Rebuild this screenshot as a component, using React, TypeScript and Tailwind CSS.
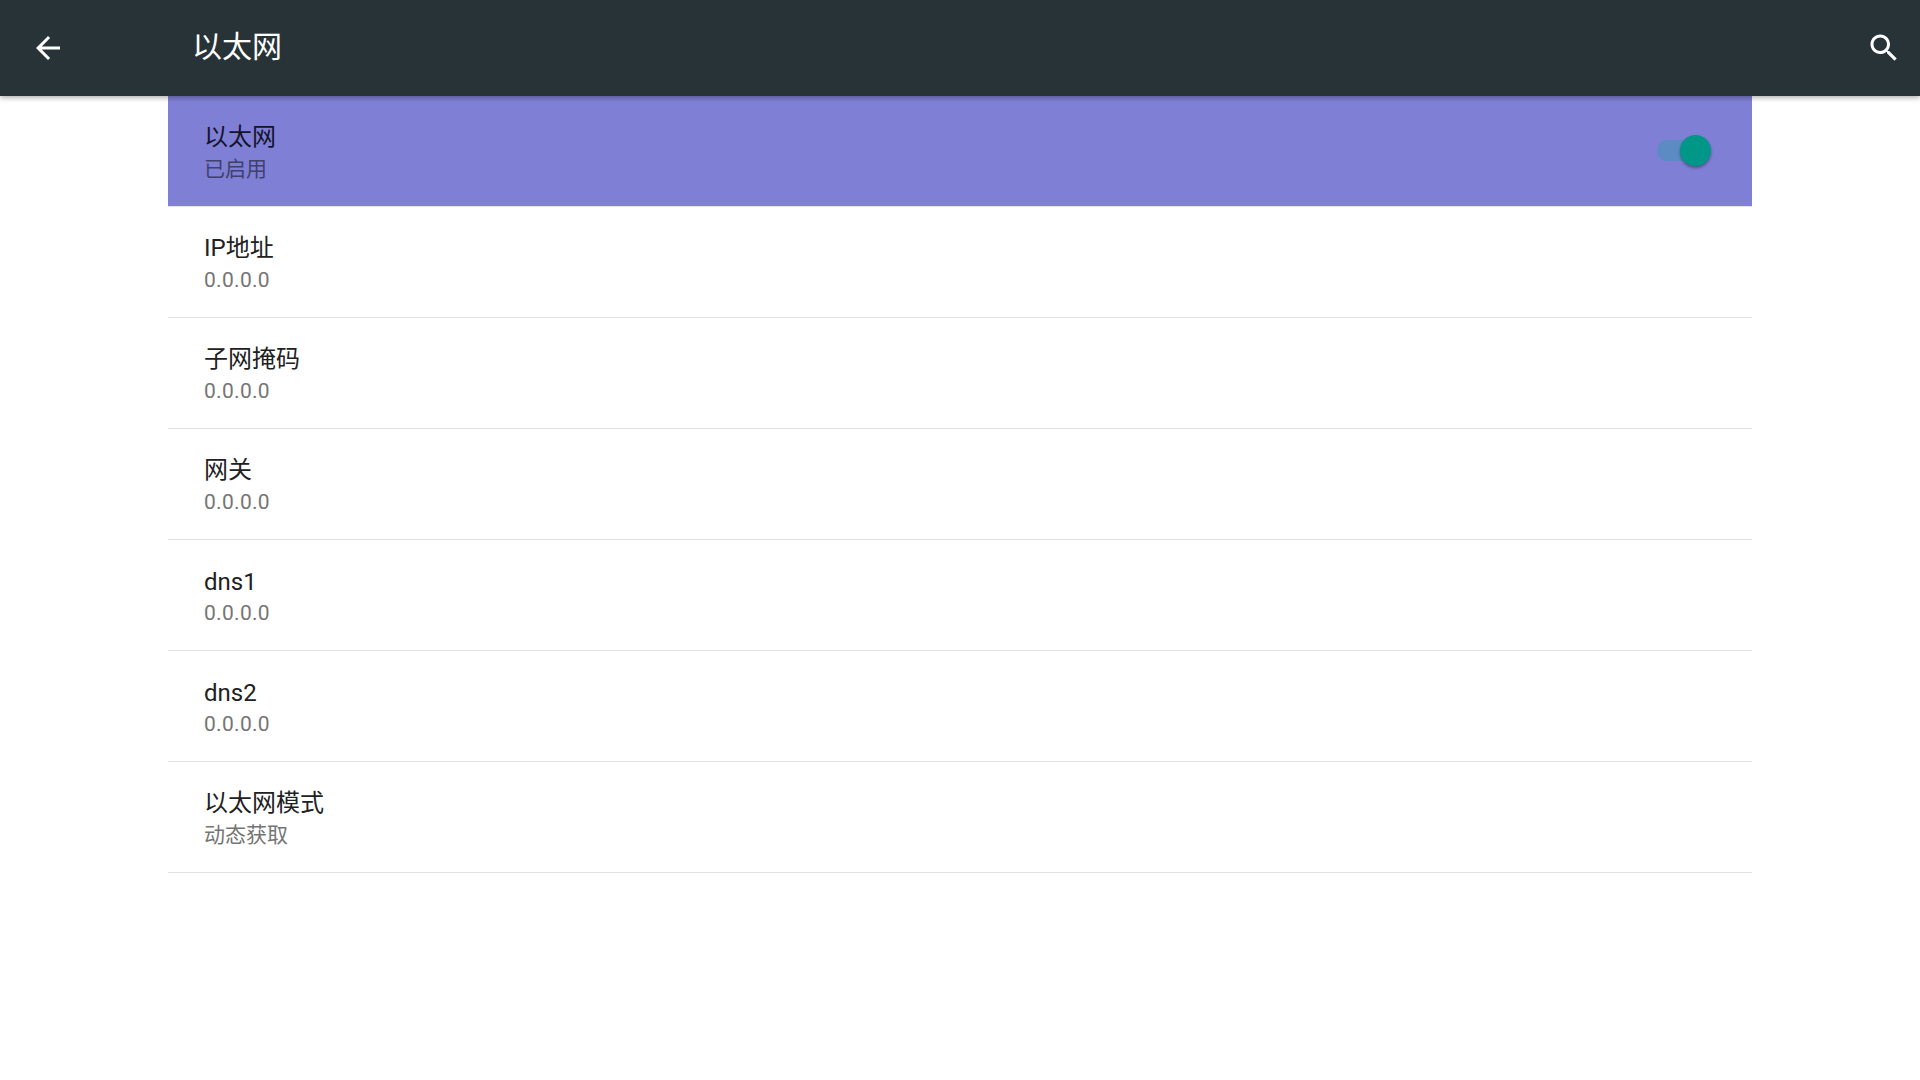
import React from "react";

interface IRow {
  title: string;
  value: string;
}

const rows: IRow[] = [
  { title: "IP地址", value: "0.0.0.0" },
  { title: "子网掩码", value: "0.0.0.0" },
  { title: "网关", value: "0.0.0.0" },
  { title: "dns1", value: "0.0.0.0" },
  { title: "dns2", value: "0.0.0.0" },
  { title: "以太网模式", value: "动态获取" },
];

const fontClass = "font-['Roboto','Noto_Sans_CJK_SC',sans-serif]";

const Row: React.FC<IRow> = ({ title, value }) => (
  <div className="h-[111px] border-b border-[#e2e2e2] pl-9 pt-[3px] flex flex-col justify-center">
    <div
      className={`text-[24px] text-[#212121] ${
        title.startsWith("dns") ? "leading-[32px]" : "leading-[30px] mb-[2px]"
      }`}
    >
      {title}
    </div>
    <div className={`text-[21px] leading-[30px] text-[#757575] ${value === "0.0.0.0" ? "tracking-[0.3px]" : ""}`}>
      {value}
    </div>
  </div>
);

const App: React.FC = () => {
  return (
    <div className={`w-[1920px] h-[1080px] bg-white overflow-hidden ${fontClass}`}>
      <header className="relative z-10 h-24 bg-[#283338] shadow-[0_2px_5px_rgba(0,0,0,0.3)] flex items-center pl-[30px] pr-[18px]">
        <svg width="36" height="36" viewBox="0 0 24 24" fill="#ffffff">
          <path d="M20 11H7.83l5.59-5.59L12 4l-8 8 8 8 1.41-1.41L7.83 13H20v-2z" />
        </svg>
        <div className="ml-[126px] flex-1 text-[30px] leading-9 text-white -mt-[2px]">以太网</div>
        <svg width="36" height="36" viewBox="0 0 24 24" fill="#ffffff">
          <path d="M15.5 14h-.79l-.28-.27C15.41 12.59 16 11.11 16 9.5 16 5.91 13.09 3 9.5 3S3 5.91 3 9.5 5.91 16 9.5 16c1.61 0 3.09-.59 4.23-1.57l.27.28v.79l5 4.99L20.49 19l-4.99-5zm-6 0C7.01 14 5 11.99 5 9.5S7.01 5 9.5 5 14 7.01 14 9.5 11.99 14 9.5 14z" />
        </svg>
      </header>
      <main className="mx-[168px]">
        <div className="h-[111px] border-b border-[#e2e2e2] bg-[#7f7fd5] pl-9 pt-[3px] pr-[41px] flex items-center justify-between">
          <div>
            <div className="text-[24px] leading-[30px] mb-[2px] text-[#15132b]">以太网</div>
            <div className="text-[21px] leading-[30px] text-[#403f6e]">已启用</div>
          </div>
          <div className="relative w-[54px] h-[21px] -mt-[4px] rounded-full bg-[#5c8bc4]">
            <div className="absolute right-0 top-[-5px] w-[31px] h-[31px] rounded-full bg-[#009688] shadow-[0_2px_3px_rgba(0,0,0,0.35)]" />
          </div>
        </div>
        {rows.map((row) => (
          <Row key={row.title} title={row.title} value={row.value} />
        ))}
      </main>
    </div>
  );
};

export default App;
